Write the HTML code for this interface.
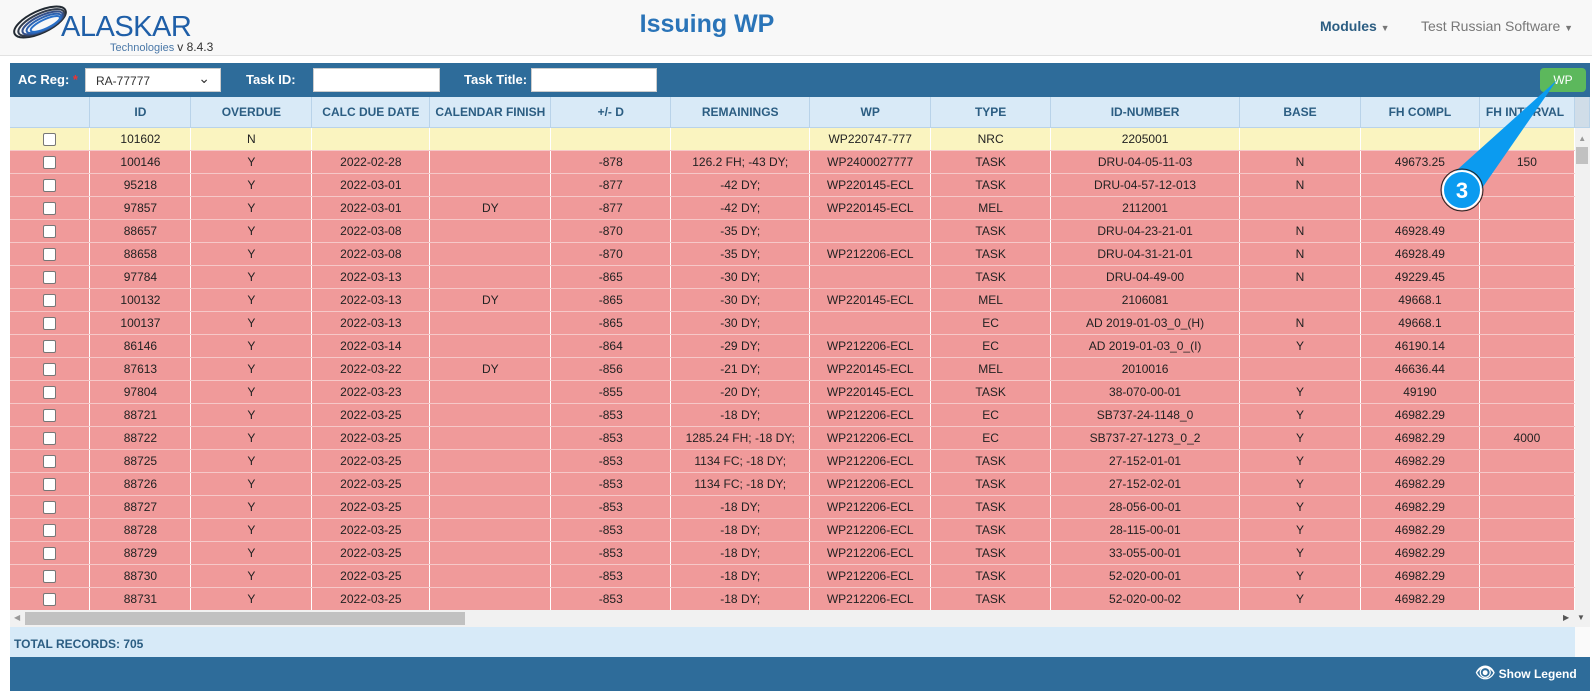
<!DOCTYPE html>
<html><head><meta charset="utf-8"><style>
*{box-sizing:border-box;margin:0;padding:0}
body{width:1592px;height:691px;overflow:hidden;background:#fff;font-family:"Liberation Sans",Arial,sans-serif;font-size:12px;color:#222;position:relative}
.hdr{position:absolute;left:0;top:0;width:1592px;height:56px;background:#f8f8f8;border-bottom:1px solid #e2e2e2}
.title{position:absolute;left:607px;top:10px;width:200px;text-align:center;font-size:25px;font-weight:bold;color:#2a74b8}
.nav{position:absolute;top:18px;font-size:14px}
.panel{position:absolute;left:10px;top:63px;width:1580px;height:628px;background:#2e6c9a}
.tb{position:absolute;left:0;top:0;width:1580px;height:34px;color:#fff;font-weight:bold;font-size:13px}
.tb span{position:absolute;top:9px}
.inp{position:absolute;top:5px;height:24px;background:#fff;border:1px solid #ccc}
table{position:absolute;left:0;top:34px;border-collapse:collapse;table-layout:fixed}
td,th{border-right:1px solid #fff;text-align:center;white-space:nowrap;overflow:hidden;height:23px;border-bottom:1px solid #f6c8c8}
th{background:#d9eaf7;color:#2b5d82;font-size:12px;font-weight:bold;height:30px;border-right:1px solid #b9d3e9;border-bottom:1px solid #b9d3e9}
tr.r td{background:#f09a9a}
tr.y td{background:#faf4c0}
.cb{display:inline-block;width:13px;height:13px;border:1px solid #777;border-radius:2px;background:#fff;vertical-align:middle}
</style></head><body>
<div class="hdr">
<svg style="position:absolute;left:8px;top:3px" width="62" height="44" viewBox="0 0 62 44">
<g fill="none" stroke-width="2">
<ellipse cx="32" cy="19" rx="28" ry="11" transform="rotate(-25 32 19)" stroke="#222a33"/>
<ellipse cx="33" cy="20" rx="25" ry="9" transform="rotate(-25 32 19)" stroke="#333d4e"/>
<ellipse cx="34" cy="21" rx="22" ry="7.5" transform="rotate(-25 32 19)" stroke="#34508a"/>
<ellipse cx="35" cy="22" rx="19" ry="6" transform="rotate(-25 32 19)" stroke="#2c62b0"/>
<ellipse cx="36" cy="23" rx="16" ry="4.5" transform="rotate(-25 32 19)" stroke="#2a70c8"/>
</g></svg>
<div style="position:absolute;left:61px;top:11px;font-size:29px;color:#1f5fa8;letter-spacing:-0.5px">ALASKAR</div>
<div style="position:absolute;left:110px;top:40px;font-size:11px;color:#4a78a8">Technologies <span style="color:#333;font-size:12px">v 8.4.3</span></div>
<div class="title">Issuing WP</div>
<div class="nav" style="left:1320px;color:#2b5d82;font-weight:bold">Modules <span style="font-size:9px;color:#777">▼</span></div>
<div class="nav" style="left:1421px;color:#777">Test Russian Software <span style="font-size:9px">▼</span></div>
</div>
<div class="panel">
<div class="tb">
<span style="left:8px">AC Reg: <b style="color:#e33">*</b></span>
<div class="inp" style="left:75px;width:136px;color:#333;font-weight:normal;font-size:12px;padding:5px 10px">RA-77777<span style="position:absolute;right:10px;top:1px;font-size:14px">⌄</span></div>
<span style="left:236px">Task ID:</span>
<div class="inp" style="left:303px;width:127px"></div>
<span style="left:454px">Task Title:</span>
<div class="inp" style="left:521px;width:126px"></div>
<div style="position:absolute;left:1530px;top:5px;width:46px;height:24px;background:#5cb85c;border-radius:4px;text-align:center;line-height:24px;font-weight:normal;font-size:12px">WP</div>
</div>
<table>
<colgroup><col style="width:80px"><col style="width:101px"><col style="width:121px"><col style="width:118px"><col style="width:121px"><col style="width:120px"><col style="width:139px"><col style="width:121px"><col style="width:120px"><col style="width:189px"><col style="width:121px"><col style="width:119px"><col style="width:95px"><col style="width:15px"></colgroup>
<tr><th></th><th>ID</th><th>OVERDUE</th><th>CALC DUE DATE</th><th>CALENDAR FINISH</th><th>+/- D</th><th>REMAININGS</th><th>WP</th><th>TYPE</th><th>ID-NUMBER</th><th>BASE</th><th>FH COMPL</th><th style="text-align:left;padding-left:6px">FH INTERVAL</th><th style="background:#d0dde8"></th></tr>
<tr class="y"><td><i class="cb"></i></td><td>101602</td><td>N</td><td></td><td></td><td></td><td></td><td>WP220747-777</td><td>NRC</td><td>2205001</td><td></td><td></td><td></td><td rowspan="21" style="background:#f1f1f1;vertical-align:top;border:none"><div style="color:#999;font-size:8px;margin-top:6px">▲</div><div style="width:12px;height:17px;background:#c1c1c1;margin:4px auto"></div></td></tr>
<tr class="r"><td><i class="cb"></i></td><td>100146</td><td>Y</td><td>2022-02-28</td><td></td><td>-878</td><td>126.2 FH; -43 DY;</td><td>WP2400027777</td><td>TASK</td><td>DRU-04-05-11-03</td><td>N</td><td>49673.25</td><td>150</td></tr>
<tr class="r"><td><i class="cb"></i></td><td>95218</td><td>Y</td><td>2022-03-01</td><td></td><td>-877</td><td>-42 DY;</td><td>WP220145-ECL</td><td>TASK</td><td>DRU-04-57-12-013</td><td>N</td><td></td><td></td></tr>
<tr class="r"><td><i class="cb"></i></td><td>97857</td><td>Y</td><td>2022-03-01</td><td>DY</td><td>-877</td><td>-42 DY;</td><td>WP220145-ECL</td><td>MEL</td><td>2112001</td><td></td><td></td><td></td></tr>
<tr class="r"><td><i class="cb"></i></td><td>88657</td><td>Y</td><td>2022-03-08</td><td></td><td>-870</td><td>-35 DY;</td><td></td><td>TASK</td><td>DRU-04-23-21-01</td><td>N</td><td>46928.49</td><td></td></tr>
<tr class="r"><td><i class="cb"></i></td><td>88658</td><td>Y</td><td>2022-03-08</td><td></td><td>-870</td><td>-35 DY;</td><td>WP212206-ECL</td><td>TASK</td><td>DRU-04-31-21-01</td><td>N</td><td>46928.49</td><td></td></tr>
<tr class="r"><td><i class="cb"></i></td><td>97784</td><td>Y</td><td>2022-03-13</td><td></td><td>-865</td><td>-30 DY;</td><td></td><td>TASK</td><td>DRU-04-49-00</td><td>N</td><td>49229.45</td><td></td></tr>
<tr class="r"><td><i class="cb"></i></td><td>100132</td><td>Y</td><td>2022-03-13</td><td>DY</td><td>-865</td><td>-30 DY;</td><td>WP220145-ECL</td><td>MEL</td><td>2106081</td><td></td><td>49668.1</td><td></td></tr>
<tr class="r"><td><i class="cb"></i></td><td>100137</td><td>Y</td><td>2022-03-13</td><td></td><td>-865</td><td>-30 DY;</td><td></td><td>EC</td><td>AD 2019-01-03_0_(H)</td><td>N</td><td>49668.1</td><td></td></tr>
<tr class="r"><td><i class="cb"></i></td><td>86146</td><td>Y</td><td>2022-03-14</td><td></td><td>-864</td><td>-29 DY;</td><td>WP212206-ECL</td><td>EC</td><td>AD 2019-01-03_0_(I)</td><td>Y</td><td>46190.14</td><td></td></tr>
<tr class="r"><td><i class="cb"></i></td><td>87613</td><td>Y</td><td>2022-03-22</td><td>DY</td><td>-856</td><td>-21 DY;</td><td>WP220145-ECL</td><td>MEL</td><td>2010016</td><td></td><td>46636.44</td><td></td></tr>
<tr class="r"><td><i class="cb"></i></td><td>97804</td><td>Y</td><td>2022-03-23</td><td></td><td>-855</td><td>-20 DY;</td><td>WP220145-ECL</td><td>TASK</td><td>38-070-00-01</td><td>Y</td><td>49190</td><td></td></tr>
<tr class="r"><td><i class="cb"></i></td><td>88721</td><td>Y</td><td>2022-03-25</td><td></td><td>-853</td><td>-18 DY;</td><td>WP212206-ECL</td><td>EC</td><td>SB737-24-1148_0</td><td>Y</td><td>46982.29</td><td></td></tr>
<tr class="r"><td><i class="cb"></i></td><td>88722</td><td>Y</td><td>2022-03-25</td><td></td><td>-853</td><td>1285.24 FH; -18 DY;</td><td>WP212206-ECL</td><td>EC</td><td>SB737-27-1273_0_2</td><td>Y</td><td>46982.29</td><td>4000</td></tr>
<tr class="r"><td><i class="cb"></i></td><td>88725</td><td>Y</td><td>2022-03-25</td><td></td><td>-853</td><td>1134 FC; -18 DY;</td><td>WP212206-ECL</td><td>TASK</td><td>27-152-01-01</td><td>Y</td><td>46982.29</td><td></td></tr>
<tr class="r"><td><i class="cb"></i></td><td>88726</td><td>Y</td><td>2022-03-25</td><td></td><td>-853</td><td>1134 FC; -18 DY;</td><td>WP212206-ECL</td><td>TASK</td><td>27-152-02-01</td><td>Y</td><td>46982.29</td><td></td></tr>
<tr class="r"><td><i class="cb"></i></td><td>88727</td><td>Y</td><td>2022-03-25</td><td></td><td>-853</td><td>-18 DY;</td><td>WP212206-ECL</td><td>TASK</td><td>28-056-00-01</td><td>Y</td><td>46982.29</td><td></td></tr>
<tr class="r"><td><i class="cb"></i></td><td>88728</td><td>Y</td><td>2022-03-25</td><td></td><td>-853</td><td>-18 DY;</td><td>WP212206-ECL</td><td>TASK</td><td>28-115-00-01</td><td>Y</td><td>46982.29</td><td></td></tr>
<tr class="r"><td><i class="cb"></i></td><td>88729</td><td>Y</td><td>2022-03-25</td><td></td><td>-853</td><td>-18 DY;</td><td>WP212206-ECL</td><td>TASK</td><td>33-055-00-01</td><td>Y</td><td>46982.29</td><td></td></tr>
<tr class="r"><td><i class="cb"></i></td><td>88730</td><td>Y</td><td>2022-03-25</td><td></td><td>-853</td><td>-18 DY;</td><td>WP212206-ECL</td><td>TASK</td><td>52-020-00-01</td><td>Y</td><td>46982.29</td><td></td></tr>
<tr class="r"><td><i class="cb"></i></td><td>88731</td><td>Y</td><td>2022-03-25</td><td></td><td>-853</td><td>-18 DY;</td><td>WP212206-ECL</td><td>TASK</td><td>52-020-00-02</td><td>Y</td><td>46982.29</td><td></td></tr>
</table>
<div style="position:absolute;left:0;top:547px;width:1580px;height:17px;background:#f1f1f1">
<span style="position:absolute;left:4px;top:3px;font-size:8px;color:#999">◀</span>
<div style="position:absolute;left:15px;top:2px;width:440px;height:13px;background:#c1c1c1"></div>
<span style="position:absolute;left:1553px;top:3px;font-size:8px;color:#555">▶</span>
<span style="position:absolute;left:1567px;top:3px;font-size:8px;color:#555">▼</span>
</div>
<div style="position:absolute;left:0;top:564px;width:1565px;height:30px;background:#d7eaf8;color:#2b5d82;font-weight:bold;padding:10px 4px">TOTAL RECORDS: 705</div>
<div style="position:absolute;left:1565px;top:564px;width:15px;height:30px;background:#fafafa"></div>
<div style="position:absolute;left:1465px;top:600px;color:#fff;font-weight:bold;font-size:12px"><span style="font-size:16px">👁</span> Show Legend</div>
</div>
<svg style="position:absolute;left:0;top:0" width="1592" height="691">
<polygon points="1557,80 1448,178 1478,194" fill="#0b9bf0"/>
<circle cx="1462" cy="190" r="19" fill="#0b9bf0" stroke="#fff" stroke-width="2"/>
<circle cx="1462" cy="190" r="21" fill="none" stroke="#222" stroke-width="1"/>
<text x="1462" y="198" font-size="22" font-weight="bold" fill="#fff" text-anchor="middle" font-family="Liberation Sans">3</text>
</svg>
</body></html>
